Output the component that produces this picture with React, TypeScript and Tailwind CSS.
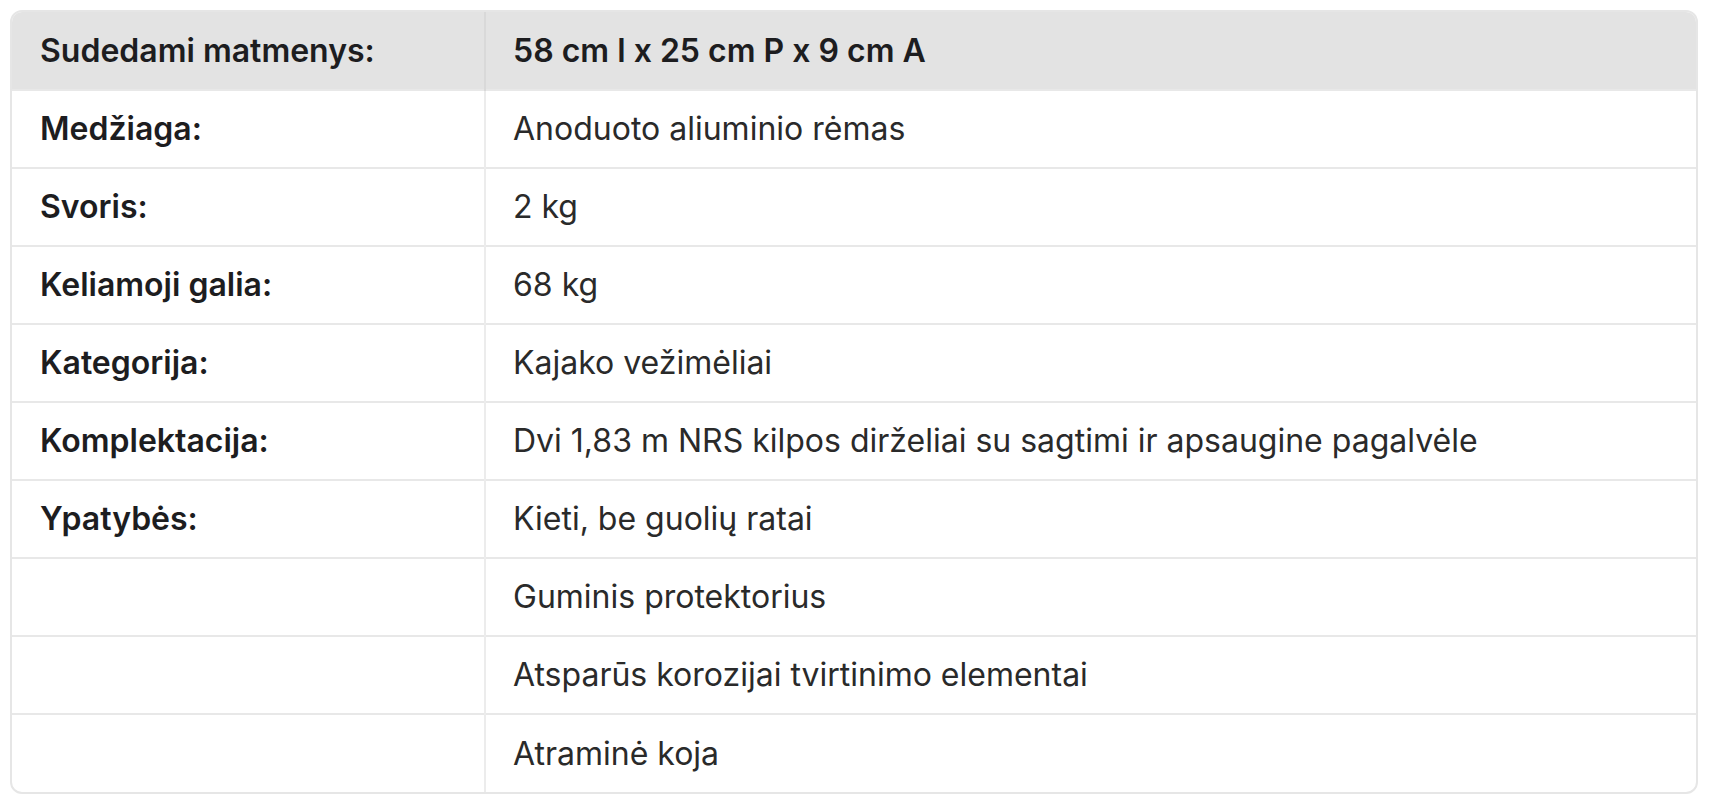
import React from 'react';

type Row = {
    label: string;
    value: string;
};

const rows: Row[] = [
    { label: 'Medžiaga:', value: 'Anoduoto aliuminio rėmas' },
    { label: 'Svoris:', value: '2 kg' },
    { label: 'Keliamoji galia:', value: '68 kg' },
    { label: 'Kategorija:', value: 'Kajako vežimėliai' },
    { label: 'Komplektacija:', value: 'Dvi 1,83 m NRS kilpos dirželiai su sagtimi ir apsaugine pagalvėle' },
    { label: 'Ypatybės:', value: 'Kieti, be guolių ratai' },
    { label: '', value: 'Guminis protektorius' },
    { label: '', value: 'Atsparūs korozijai tvirtinimo elementai' },
    { label: '', value: 'Atraminė koja' },
];

export default function App() {
    return (
        <div className="min-h-screen bg-white pt-[10px] pl-[10px] font-['Inter',sans-serif] text-[#1d1d1f]">
            <div className="w-[1688px] overflow-hidden rounded-[12px] border-2 border-[#e6e6e6]">
                <table className="w-full border-collapse text-[32px]">
                    <thead>
                        <tr className="h-[78px] bg-[#e3e3e3]">
                            <th className="w-[473px] border-r-2 border-[#d9d9d9] px-[28px] text-left font-semibold">
                                Sudedami matmenys:
                            </th>
                            <th className="px-[27px] text-left font-semibold">58 cm l x 25 cm P x 9 cm A</th>
                        </tr>
                    </thead>
                    <tbody>
                        {rows.map((row, i) => (
                            <tr key={i} className="h-[78px] border-t-2 border-[#e8e8e8]">
                                <td className="border-r-2 border-[#ececec] px-[28px] font-semibold">{row.label}</td>
                                <td className="px-[27px] text-[#2a2a2a]">{row.value}</td>
                            </tr>
                        ))}
                    </tbody>
                </table>
            </div>
        </div>
    );
}
